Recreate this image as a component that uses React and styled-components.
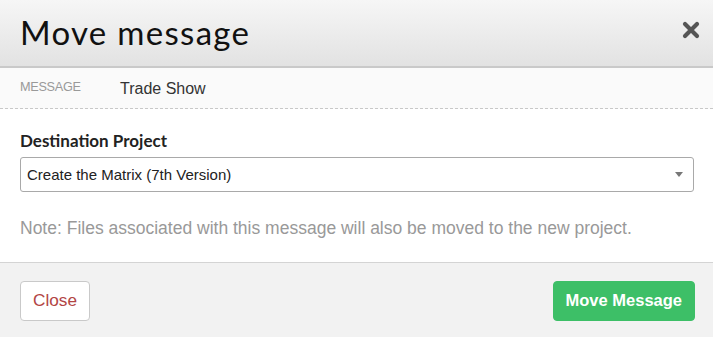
import React from "react";
import styled, { createGlobalStyle } from "styled-components";

const GlobalStyle = createGlobalStyle`
  html, body {
    margin: 0;
    padding: 0;
    background: #fff;
  }
  body {
    font-family: "Liberation Sans", Arial, sans-serif;
  }
`;

const Modal = styled.div`
  width: 713px;
  height: 337px;
  display: flex;
  flex-direction: column;
  background: #fff;
`;

const Header = styled.div`
  height: 68px;
  flex-shrink: 0;
  box-sizing: border-box;
  display: flex;
  align-items: center;
  justify-content: space-between;
  padding: 0 13px 0 20px;
  background: linear-gradient(to bottom, #f6f6f6, #e2e2e2);
  border-bottom: 2px solid #c9c9c9;
`;

const Title = styled.h1`
  margin: 0;
  font-family: Lato, "Open Sans", sans-serif;
  font-weight: 400;
  font-size: 33px;
  color: #111;
  letter-spacing: 1.3px;
  padding-bottom: 2px;
`;

const CloseIcon = styled.button`
  border: none;
  background: none;
  padding: 0;
  width: 18px;
  height: 18px;
  cursor: pointer;
  display: flex;
  margin-bottom: 6px;
`;

const MetaRow = styled.div`
  height: 40px;
  flex-shrink: 0;
  display: flex;
  align-items: center;
  padding: 0 20px;
  background: #fafafa;
  border-bottom: 1px dashed #c8c8c8;
`;

const MetaLabel = styled.span`
  width: 100px;
  font-size: 12.7px;
  color: #999;
  text-transform: uppercase;
  letter-spacing: -0.3px;
  margin-top: -2px;
`;

const MetaValue = styled.span`
  font-size: 16px;
  color: #333;
  margin-top: 1px;
`;

const Body = styled.div`
  flex: 1;
  padding: 21px 19px 0 20px;
  border-bottom: 1px solid #d4d4d4;
`;

const FieldLabel = styled.label`
  display: block;
  font-family: Lato, sans-serif;
  font-weight: 700;
  font-size: 17px;
  color: #222;
  margin-bottom: 6px;
`;

const SelectBox = styled.div`
  height: 35px;
  box-sizing: border-box;
  border: 1px solid #a9a9a9;
  border-radius: 3px;
  display: flex;
  align-items: center;
  justify-content: space-between;
  padding: 0 10px 0 6px;
  font-size: 15px;
  color: #222;
`;

const Caret = styled.span`
  width: 0;
  height: 0;
  border-left: 4px solid transparent;
  border-right: 4px solid transparent;
  border-top: 5px solid #777;
`;

const Note = styled.p`
  margin: 26px 0 0;
  font-size: 17.5px;
  color: #999;
`;

const Footer = styled.div`
  height: 74px;
  flex-shrink: 0;
  box-sizing: border-box;
  display: flex;
  align-items: center;
  justify-content: space-between;
  padding: 1px 18px 0 20px;
  background: #f2f2f2;
`;

const Button = styled.button`
  height: 40px;
  box-sizing: border-box;
  padding: 0 12px;
  border-radius: 4px;
  font-family: "Liberation Sans", Arial, sans-serif;
  font-size: ${({ $primary }) => ($primary ? "16.5px" : "17.2px")};
  cursor: pointer;
  border: 1px solid ${({ $primary }) => ($primary ? "#3dbf67" : "#c9c9c9")};
  background: ${({ $primary }) => ($primary ? "#3dbf67" : "#fff")};
  color: ${({ $primary }) => ($primary ? "#fff" : "#b24444")};
  font-weight: ${({ $primary }) => ($primary ? 600 : 400)};
`;

export default function App() {
  return (
    <Modal>
      <GlobalStyle />
      <Header>
        <Title>Move message</Title>
        <CloseIcon aria-label="Close">
          <svg width="18" height="18" viewBox="0 0 18 18">
            <path
              d="M3 3 L15 15 M15 3 L3 15"
              stroke="#555"
              strokeWidth="4.2"
              strokeLinecap="round"
            />
          </svg>
        </CloseIcon>
      </Header>
      <MetaRow>
        <MetaLabel>Message</MetaLabel>
        <MetaValue>Trade Show</MetaValue>
      </MetaRow>
      <Body>
        <FieldLabel>Destination Project</FieldLabel>
        <SelectBox>
          <span>Create the Matrix (7th Version)</span>
          <Caret />
        </SelectBox>
        <Note>
          Note: Files associated with this message will also be moved to the new
          project.
        </Note>
      </Body>
      <Footer>
        <Button>Close</Button>
        <Button $primary>Move Message</Button>
      </Footer>
    </Modal>
  );
}
